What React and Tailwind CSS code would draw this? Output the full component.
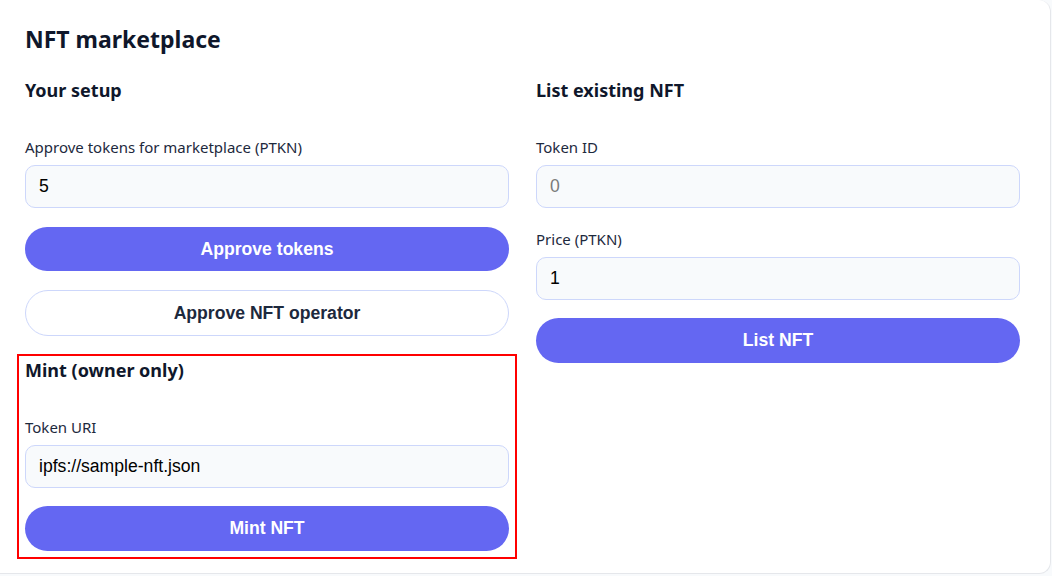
import React from 'react';

const sans = { fontFamily: '"Noto Sans", "Open Sans", sans-serif' };

const Field = ({ label, value, placeholder, className = '' }) => (
    <div className={className}>
        <label className="block text-[15px] leading-[20px] text-slate-800">{label}</label>
        <input
            defaultValue={value}
            placeholder={placeholder}
            className="mt-2 block w-full h-[43px] px-[13px] rounded-[10px] border border-[#cdd7fb] bg-[#f8fafc] text-[17.6px] text-black placeholder:text-[#7a7a7a] font-['Liberation_Sans',Arial,sans-serif] outline-none"
        />
    </div>
);

const PrimaryButton = ({ children, className = '' }) => (
    <button className={`block w-full h-[45px] rounded-full bg-[#6467f2] text-white text-[17.6px] font-bold font-['Liberation_Sans',Arial,sans-serif] ${className}`}>
        {children}
    </button>
);

const App = () => {
    return (
        <div className="w-[1052px] h-[576px] bg-[#f8fafc] overflow-hidden" style={sans}>
            <div className="w-[1051px] h-[574px] bg-white border-r border-b border-[#e5e7eb] rounded-tr-xl rounded-br-xl pl-[25px] pr-[31px] pt-[23px]">
                <h2 className="text-[23px] leading-[32px] font-bold text-slate-900">NFT marketplace</h2>

                <div className="mt-[21px] grid grid-cols-[484px_484px] gap-x-[27px]">
                    {/* left column */}
                    <div className="flex flex-col">
                        <h3 className="text-[18px] leading-[28px] font-bold text-slate-900">Your setup</h3>
                        <Field className="mt-[33px]" label="Approve tokens for marketplace (PTKN)" value="5" />
                        <PrimaryButton className="mt-[19px] !h-[44px]">Approve tokens</PrimaryButton>
                        <button className="mt-[19px] block w-full h-[46px] rounded-full border border-[#cdd7fb] bg-white text-[17.6px] font-bold text-slate-800 font-['Liberation_Sans',Arial,sans-serif]">
                            Approve NFT operator
                        </button>

                        <div className="mt-[18px] -mx-[8px] border-2 border-[#ff0000] pl-[6px] pr-[6px] pb-[6px]">
                            <h3 className="text-[18px] leading-[28px] font-bold text-slate-900">Mint (owner only)</h3>
                            <Field className="mt-[33px]" label="Token URI" value="ipfs://sample-nft.json" />
                            <PrimaryButton className="mt-[18px]">Mint NFT</PrimaryButton>
                        </div>
                    </div>

                    {/* right column */}
                    <div className="flex flex-col">
                        <h3 className="text-[18px] leading-[28px] font-bold text-slate-900">List existing NFT</h3>
                        <Field className="mt-[33px]" label="Token ID" placeholder="0" />
                        <Field className="mt-[21px]" label="Price (PTKN)" value="1" />
                        <PrimaryButton className="mt-[18px]">List NFT</PrimaryButton>
                    </div>
                </div>
            </div>
        </div>
    );
};

export default App;
